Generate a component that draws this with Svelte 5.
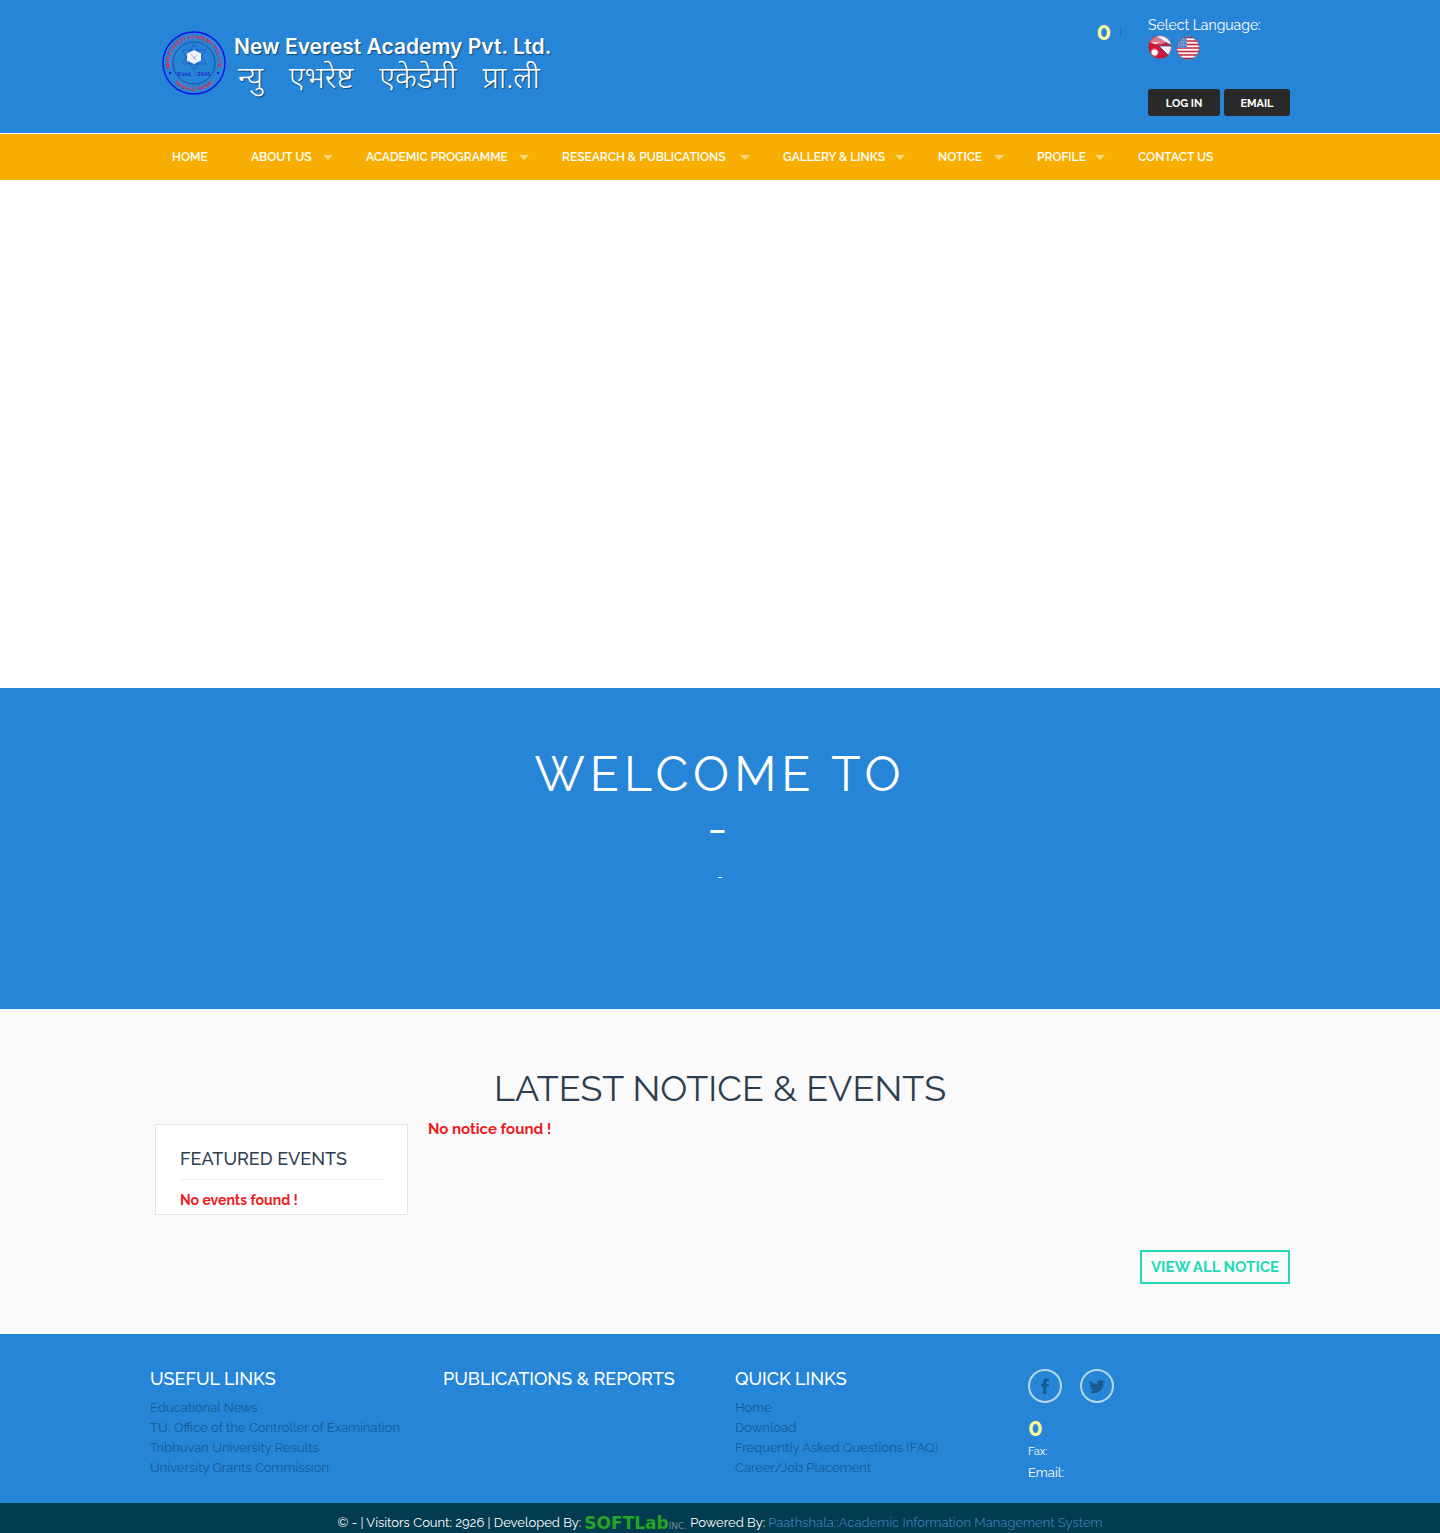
<script>
  const menu = [
    { label: 'HOME', sub: false },
    { label: 'ABOUT US', sub: true },
    { label: 'ACADEMIC PROGRAMME', sub: true },
    { label: 'RESEARCH & PUBLICATIONS', sub: true },
    { label: 'GALLERY & LINKS', sub: true },
    { label: 'NOTICE', sub: true },
    { label: 'PROFILE', sub: true },
    { label: 'CONTACT US', sub: false }
  ];
  const nepaliName = ['न्यु', 'एभरेष्ट', 'एकेडेमी', 'प्रा.ली'];
  const columns = [
    {
      title: 'USEFUL LINKS',
      links: [
        'Educational News',
        'TU, Office of the Controller of Examination',
        'Tribhuvan University Results',
        'University Grants Commission'
      ]
    },
    { title: 'PUBLICATIONS & REPORTS', links: [] },
    {
      title: 'QUICK LINKS',
      links: ['Home', 'Download', 'Frequently Asked Questions (FAQ)', 'Career/Job Placement']
    }
  ];
</script>

<header class="top">
  <div class="container top-row">
    <a class="brand" href="#home">
      <svg class="seal" viewBox="0 0 64 64" aria-hidden="true">
        <defs>
          <path id="arc-top" d="M12 46 A24.400 24.400 0 1 1 52 46" />
          <path id="arc-bottom" d="M6 41 A27.500 27.500 0 0 0 58 41" />
        </defs>
        <circle cx="32" cy="32" r="31" fill="none" stroke="#0a12e8" stroke-width="1.4" />
        <circle cx="32" cy="32" r="21" fill="none" stroke="#1c4f96" stroke-width="1" />
        <text class="ring"><textPath href="#arc-top" startOffset="50%" text-anchor="middle">NEW EVEREST ACADEMY PVT. LTD.</textPath></text>
        <text class="ring"><textPath href="#arc-bottom" startOffset="50%" text-anchor="middle">Haripur-2, Sarlahi</textPath></text>
        <path d="M32 13 L44 33 H20 Z M32 39 L20 19 H44 Z" fill="none" stroke="#2950c4" stroke-width="0.8" />
        <path d="M32 19 L39 22.500 V29.500 L32 33 L25 29.500 V22.500 Z" fill="#eef2fb" />
        <path d="M29 23 L34 29 M31 28 L35 24" stroke="#8aa0d8" stroke-width="0.8" />
        <text class="estd" x="32" y="45" text-anchor="middle">Estd. : 2041</text>
        <circle cx="8" cy="42" r="1.200" fill="#1a1ad8" />
        <circle cx="56" cy="42" r="1.200" fill="#1a1ad8" />
      </svg>
      <span class="names">
        <span class="name-en">New Everest Academy Pvt. Ltd.</span>
        <span class="name-ne" lang="ne">
          {#each nepaliName as word}<span>{word}</span>{/each}
        </span>
      </span>
    </a>
    <div class="phone"><strong>0</strong><span class="bar">|</span></div>
    <div class="tools">
      <div class="lang">Select Language:</div>
      <div class="flags">
        <button class="flag" aria-label="Nepali">
          <svg viewBox="0 0 24 24">
            <defs><clipPath id="round-np"><circle cx="12" cy="12" r="11.500" /></clipPath></defs>
            <g clip-path="url(#round-np)">
              <rect width="24" height="24" fill="#f6f6fb" />
              <path d="M0 0 H6 L24 11 H11 L21 21 L18 24 H0 Z" fill="#cf1535" />
              <path d="M6 0 L24 11 H11 L21 21" fill="none" stroke="#4a5aa0" stroke-width="1" />
              <path d="M3 6 Q7 12 12 6 Q7 9 3 6 Z" fill="#fff" />
              <circle cx="6.500" cy="17.500" r="3" fill="#fff" />
              <circle cx="6.500" cy="17.500" r="3.500" fill="none" stroke="#fff" stroke-dasharray="1 1" />
              <ellipse cx="10" cy="5" rx="9" ry="4.500" fill="#fff" opacity=".4" />
            </g>
            <circle cx="12" cy="12" r="11.300" fill="none" stroke="#7a2346" stroke-width=".8" opacity=".7" />
          </svg>
        </button>
        <button class="flag us" aria-label="English">
          <svg viewBox="0 0 24 24">
            <defs><clipPath id="round-us"><circle cx="12" cy="12" r="11.500" /></clipPath></defs>
            <g clip-path="url(#round-us)">
              <rect width="24" height="24" fill="#f8f4f6" />
              <path d="M0 1.500H24M0 5H24M0 8.500H24M0 12H24M0 15.500H24M0 19H24M0 22.500H24" stroke="#cf1f38" stroke-width="1.700" />
              <rect width="11" height="12" fill="#5c8ac8" />
              <path d="M2 3H11M2 6H11M2 9H11" stroke="#b5cdf0" stroke-width="1" stroke-dasharray="1 1.500" />
            </g>
            <circle cx="12" cy="12" r="11.300" fill="none" stroke="#4d2b58" stroke-width=".8" opacity=".7" />
          </svg>
        </button>
      </div>
      <div class="actions">
        <button class="dark">LOG IN</button>
        <button class="dark">EMAIL</button>
      </div>
    </div>
  </div>
</header>

<nav class="menu">
  <ul class="container">
    {#each menu as item}
      <li>
        <a href="#menu">{item.label}</a>
        {#if item.sub}<span class="caret"></span>{/if}
      </li>
    {/each}
  </ul>
</nav>

<div class="slider"></div>

<section class="welcome">
  <h1>WELCOME TO</h1>
  <p class="rule">-</p>
  <p class="intro">-</p>
</section>

<section class="notices">
  <div class="container">
    <h2>LATEST NOTICE &amp; EVENTS</h2>
    <div class="split">
      <aside>
        <h3>FEATURED EVENTS</h3>
        <p class="empty small">No events found !</p>
      </aside>
      <p class="empty">No notice found !</p>
    </div>
    <div class="more"><a href="#notices">VIEW ALL NOTICE</a></div>
  </div>
</section>

<footer>
  <div class="container cols">
    {#each columns as col}
      <div>
        <h3>{col.title}</h3>
        <ul>
          {#each col.links as link}
            <li><a href="#link">{link}</a></li>
          {/each}
        </ul>
      </div>
    {/each}
    <div class="contact">
      <div class="social">
        <a href="#facebook" aria-label="Facebook">
          <svg viewBox="0 0 16 16"><path d="M6 16V8.600H4V6h2V4.200C6 1.700 7.300.4 9.600.4H12V3.200h-1.500C9.600 3.200 9.300 3.600 9.300 4.400V6H12l-.4 2.600H9.300V16Z" /></svg>
        </a>
        <a href="#twitter" aria-label="Twitter">
          <svg viewBox="0 0 16 16"><path d="M16 3.500a6 6 0 0 1-1.700.5 3 3 0 0 0 1.300-1.700 6 6 0 0 1-2 .8A3.300 3.300 0 0 0 8 6.100 9.300 9.300 0 0 1 1.200 2.700a3.300 3.300 0 0 0 1 4.400 3 3 0 0 1-1.500-.4 3.300 3.300 0 0 0 2.600 3.200 3 3 0 0 1-1.500.1 3.300 3.300 0 0 0 3.100 2.200A6.600 6.600 0 0 1 0 13.600 9.300 9.300 0 0 0 14.300 5.300 6.500 6.500 0 0 0 16 3.500Z" /></svg>
        </a>
      </div>
      <strong class="num">0</strong>
      <span class="fax">Fax:</span>
      <span class="mail">Email:</span>
    </div>
  </div>
</footer>

<div class="legal">
  <span>© - | Visitors Count: 2926 | Developed By:</span>
  <a class="softlab" href="#softlab">SOFTLab<small>INC.</small></a>
  <span>Powered By:</span>
  <a class="system" href="#system">Paathshala::Academic Information Management System</a>
</div>

<style>
  :global(body) {
    background: #fff;
    color: #fff;
    font-family: Raleway, Lato, 'Noto Sans', sans-serif;
    font-size: 14px;
    line-height: 20px;
  }
  * {
    box-sizing: border-box;
  }
  h1, h2, h3, p, ul {
    margin: 0;
    padding: 0;
  }
  h1, h2 {
    font-weight: 400;
  }
  h3 {
    font-weight: 500;
  }
  ul {
    list-style: none;
  }
  a {
    color: inherit;
    text-decoration: none;
  }
  button {
    border: 0;
    padding: 0;
    font-family: inherit;
    cursor: pointer;
  }
  .container {
    width: 100%;
    max-width: 1140px;
    margin: 0 auto;
  }
  .top {
    background: #2785d8;
    border-bottom: 1px solid #fff;
  }
  .top-row {
    display: flex;
    align-items: flex-start;
    padding: 15px 0 17px;
  }
  .brand {
    display: flex;
    gap: 8px;
    height: 80px;
    padding: 16px 0 0 12px;
    margin-right: auto;
  }
  .seal {
    width: 64px;
    height: 64px;
  }
  .ring {
    font: 700 5px 'Liberation Sans Narrow', 'Liberation Sans', sans-serif;
    fill: #f01c34;
  }
  .estd {
    font: 700 6px 'Liberation Sans', sans-serif;
    fill: #1a2cc8;
  }
  .names {
    display: flex;
    flex-direction: column;
    text-shadow: 1px 1px 1px #12466f;
    white-space: nowrap;
  }
  .name-en {
    font: 600 21px/32px Inter, sans-serif;
  }
  .name-ne {
    display: flex;
    gap: 26px;
    padding-left: 4px;
    font: 300 30px/36px 'Noto Sans Devanagari', 'Noto Sans', sans-serif;
  }
  .phone {
    display: flex;
    gap: 8px;
    align-items: center;
    height: 34px;
    margin-right: 26px;
  }
  .phone strong, .num {
    color: #ff9;
    font-size: 24px;
    font-weight: 700;
  }
  .phone strong {
    line-height: 34px;
  }
  .bar {
    color: #1d6f83;
    font-size: 12px;
  }
  .lang {
    font-size: 14px;
  }
  .flags {
    display: flex;
    gap: 4px;
    height: 25px;
  }
  .flag {
    width: 24px;
    height: 24px;
    background: none;
  }
  .us {
    margin-top: 1px;
  }
  .flag svg {
    display: block;
  }
  .actions {
    display: flex;
    gap: 4px;
    margin-top: 29px;
  }
  .dark {
    min-width: 66px;
    padding: 2px 16px 0;
    border-radius: 3px;
    background: #292929;
    color: #fff;
    font-size: 11px;
    font-weight: 700;
    line-height: 25px;
  }
  .dark:first-child {
    min-width: 72px;
  }
  .menu {
    background: #f8ae00;
    font-size: 12px;
    font-weight: 600;
  }
  .menu ul {
    display: grid;
    grid-template-columns: 79fr 115fr 196fr 221fr 155fr 99fr 101fr 152fr;
    padding-left: 22px;
  }
  .menu li {
    display: flex;
    align-items: center;
    justify-content: space-between;
    height: 46px;
    padding-right: 33px;
    white-space: nowrap;
  }
  .menu li:first-child {
    padding-right: 0;
  }
  .caret {
    border: 5px solid transparent;
    border-top-color: #fcd77f;
    border-bottom: 0;
  }
  .slider {
    height: 508px;
  }
  .welcome {
    padding: 56px 0 121px;
    background: #2785d8;
    text-align: center;
  }
  .welcome h1 {
    font-size: 48px;
    letter-spacing: 5px;
    line-height: 60px;
  }
  .rule {
    font-size: 48px;
    letter-spacing: 5px;
    line-height: 48px;
  }
  .intro {
    margin-top: 15px;
    line-height: 21px;
  }
  .notices {
    padding: 59px 0 50px;
    background: #fafafa;
    color: #2c3e50;
  }
  .notices h2 {
    margin-bottom: 1px;
    font-size: 36px;
    line-height: 40px;
    text-align: center;
  }
  .split {
    display: flex;
    align-items: flex-start;
    gap: 20px;
    padding-left: 5px;
  }
  .split > .empty {
    padding-top: 10px;
  }
  aside {
    width: 253px;
    margin-top: 15px;
    padding: 24px 24px 4px;
    border: 1px solid #dfe4e8;
    background: #fff;
  }
  aside h3 {
    padding-bottom: 10px;
    border-bottom: 1px solid #eceeef;
    font-size: 18px;
  }
  .empty {
    color: #ed1c24;
    font-size: 15px;
    font-weight: 700;
  }
  .small {
    padding-top: 10px;
    font-size: 14px;
  }
  .more {
    display: flex;
    justify-content: flex-end;
    margin-top: 35px;
  }
  .more a {
    padding: 5px 9px;
    border: 2px solid #1fdab5;
    color: #1fdab5;
    font-size: 15px;
    font-weight: 700;
  }
  footer {
    padding: 35px 0 20px;
    background: #2785d8;
    font-size: 13px;
  }
  .cols {
    display: grid;
    grid-template-columns: 293fr 292fr 293fr 262fr;
  }
  .cols h3 {
    margin-bottom: 9px;
    font-size: 18px;
  }
  .cols li {
    color: #165a96;
  }
  .contact {
    display: flex;
    flex-direction: column;
  }
  .social {
    display: flex;
    gap: 18px;
    margin-bottom: 13px;
  }
  .social a {
    display: grid;
    place-items: center;
    width: 34px;
    height: 34px;
    border: 2px solid #b5d6e6;
    border-radius: 50%;
  }
  .social svg {
    width: 16px;
    height: 16px;
    fill: #175a94;
  }
  .num {
    line-height: 24px;
  }
  .fax {
    padding-top: 1px;
    font-size: 11px;
    line-height: 22px;
  }
  .legal {
    display: flex;
    justify-content: center;
    gap: 3px;
    padding-top: 10px;
    background: #033b50;
    font-size: 13px;
  }
  .softlab {
    color: #25a525;
    font: 700 17px/20px 'DejaVu Sans', sans-serif;
  }
  .softlab small {
    color: #74888f;
    font-size: 9px;
    font-weight: 400;
  }
  .system {
    color: #3a80b4;
  }
</style>
